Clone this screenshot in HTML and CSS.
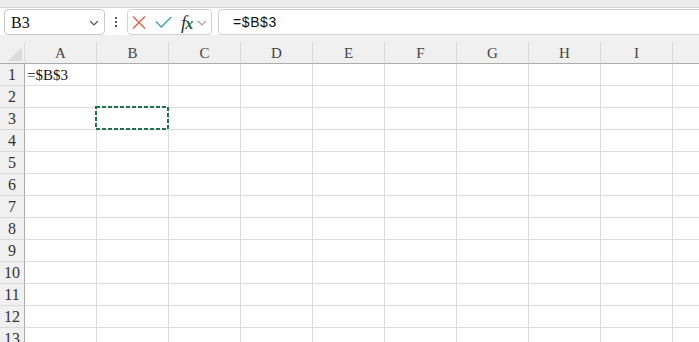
FILE: index.html
```html
<!DOCTYPE html>
<html>
<head>
<meta charset="utf-8">
<link rel="stylesheet" href="styles.css">
</head>
<body>
<div class="topstrip"></div>
<div class="fbar">
  <div class="namebox">
    <span class="nb-text">B3</span>
    <svg class="nb-chev" width="10" height="6" viewBox="0 0 10 6"><path d="M1 1 L5 5 L9 1" fill="none" stroke="#555" stroke-width="1.2"/></svg>
  </div>
  <div class="dots"><i></i><i></i><i></i></div>
  <div class="fxbox">
    <svg class="ic-x" width="14" height="13" viewBox="0 0 14 13"><path d="M1 0.5 L13 12.5 M13 0.5 L1 12.5" stroke="#e4674f" stroke-width="1.5" fill="none"/></svg>
    <svg class="ic-ok" width="17" height="12" viewBox="0 0 17 12"><path d="M0.8 5.5 L6.3 11 L16.3 1" stroke="#48a9a3" stroke-width="1.5" fill="none"/></svg>
    <span class="fx"><span class="fx-f">f</span><span class="fx-x">x</span></span>
    <svg class="fx-chev" width="10" height="6" viewBox="0 0 10 6"><path d="M1 1 L5 5 L9 1" fill="none" stroke="#a0a0a0" stroke-width="1.2"/></svg>
  </div>
  <div class="finput">=$B$3</div>
</div>
<div class="sheet">
  <div class="band"></div>
  <div class="grid">
    <div class="corner"><svg width="24" height="21" viewBox="0 0 24 21"><polygon points="22,5 22,19 8,19" fill="#dcdcdc"/></svg></div>
    <div class="ch">A</div><div class="ch">B</div><div class="ch">C</div><div class="ch">D</div><div class="ch">E</div><div class="ch">F</div><div class="ch">G</div><div class="ch">H</div><div class="ch">I</div><div class="ch"></div>

    <div class="rh">1</div><div class="c txt">=$B$3</div><div class="c"></div><div class="c"></div><div class="c"></div><div class="c"></div><div class="c"></div><div class="c"></div><div class="c"></div><div class="c"></div><div class="c"></div>
    <div class="rh">2</div><div class="c"></div><div class="c"></div><div class="c"></div><div class="c"></div><div class="c"></div><div class="c"></div><div class="c"></div><div class="c"></div><div class="c"></div><div class="c"></div>
    <div class="rh">3</div><div class="c"></div><div class="c"></div><div class="c"></div><div class="c"></div><div class="c"></div><div class="c"></div><div class="c"></div><div class="c"></div><div class="c"></div><div class="c"></div>
    <div class="rh">4</div><div class="c"></div><div class="c"></div><div class="c"></div><div class="c"></div><div class="c"></div><div class="c"></div><div class="c"></div><div class="c"></div><div class="c"></div><div class="c"></div>
    <div class="rh">5</div><div class="c"></div><div class="c"></div><div class="c"></div><div class="c"></div><div class="c"></div><div class="c"></div><div class="c"></div><div class="c"></div><div class="c"></div><div class="c"></div>
    <div class="rh">6</div><div class="c"></div><div class="c"></div><div class="c"></div><div class="c"></div><div class="c"></div><div class="c"></div><div class="c"></div><div class="c"></div><div class="c"></div><div class="c"></div>
    <div class="rh">7</div><div class="c"></div><div class="c"></div><div class="c"></div><div class="c"></div><div class="c"></div><div class="c"></div><div class="c"></div><div class="c"></div><div class="c"></div><div class="c"></div>
    <div class="rh">8</div><div class="c"></div><div class="c"></div><div class="c"></div><div class="c"></div><div class="c"></div><div class="c"></div><div class="c"></div><div class="c"></div><div class="c"></div><div class="c"></div>
    <div class="rh">9</div><div class="c"></div><div class="c"></div><div class="c"></div><div class="c"></div><div class="c"></div><div class="c"></div><div class="c"></div><div class="c"></div><div class="c"></div><div class="c"></div>
    <div class="rh">10</div><div class="c"></div><div class="c"></div><div class="c"></div><div class="c"></div><div class="c"></div><div class="c"></div><div class="c"></div><div class="c"></div><div class="c"></div><div class="c"></div>
    <div class="rh">11</div><div class="c"></div><div class="c"></div><div class="c"></div><div class="c"></div><div class="c"></div><div class="c"></div><div class="c"></div><div class="c"></div><div class="c"></div><div class="c"></div>
    <div class="rh">12</div><div class="c"></div><div class="c"></div><div class="c"></div><div class="c"></div><div class="c"></div><div class="c"></div><div class="c"></div><div class="c"></div><div class="c"></div><div class="c"></div>
    <div class="rh">13</div><div class="c"></div><div class="c"></div><div class="c"></div><div class="c"></div><div class="c"></div><div class="c"></div><div class="c"></div><div class="c"></div><div class="c"></div><div class="c"></div>
  </div>
  <svg class="marquee" width="74" height="24" viewBox="0 0 74 24"><rect x="1" y="1" width="72" height="22" fill="none" stroke="#21734a" stroke-width="2" stroke-dasharray="4 2"/></svg>
</div>
</body>
</html>
```

FILE: styles.css
```css
html, body {
  margin: 0;
  padding: 0;
  width: 699px;
  height: 342px;
  overflow: hidden;
  background: #ffffff;
}
.topstrip {
  height: 7px;
  background: #ebebeb;
  border-bottom: 1px solid #d6d6d6;
}
.fbar {
  display: flex;
  align-items: flex-start;
  padding: 1px 0 0 4px;
  height: 26px;
  background: #ffffff;
  overflow: hidden;
}
.namebox {
  box-sizing: border-box;
  width: 101px;
  height: 26px;
  border: 1px solid #cacaca;
  border-radius: 4px;
  display: flex;
  align-items: center;
  justify-content: space-between;
  padding: 0 5px 0 6px;
}
.nb-text {
  font-family: "Liberation Serif", serif;
  font-size: 16px;
  color: #111;
  margin-top: 1px;
}
.nb-chev { display: block; margin-top: 1px; }
.dots {
  width: 22px;
  height: 26px;
  display: flex;
  flex-direction: column;
  align-items: center;
  justify-content: center;
  gap: 2px;
}
.dots i {
  display: block;
  width: 2px;
  height: 2px;
  background: #555;
}
.fxbox {
  box-sizing: border-box;
  width: 85px;
  height: 26px;
  border: 1px solid #d2d2d2;
  border-radius: 4px;
  display: flex;
  align-items: center;
  padding-left: 4px;
}
.ic-x { display: block; margin-top: 1px; }
.ic-ok { display: block; margin-left: 9px; }
.fx {
  font-family: "Liberation Serif", serif;
  font-style: italic;
  font-size: 19px;
  margin-left: 9px;
  line-height: 1;
  letter-spacing: -1px;
}
.fx-f { color: #333; }
.fx-x { color: #1e5f48; font-weight: bold; font-size: 16px; }
.fx-chev { display: block; margin-left: 5px; margin-top: 2px; }
.finput {
  box-sizing: border-box;
  flex: 1;
  margin-left: 6px;
  height: 26px;
  border: 1px solid #d2d2d2;
  border-right: none;
  border-radius: 4px 0 0 4px;
  font-family: "Liberation Sans", sans-serif;
  font-size: 14px;
  letter-spacing: 0.6px;
  color: #111;
  padding-left: 14px;
  line-height: 24px;
}
.sheet {
  position: relative;
  width: 699px;
  overflow: hidden;
  background: #ffffff;
}
.band {
  height: 7px;
  background: #f0f0f0;
}
.grid {
  display: grid;
  grid-template-columns: 25px repeat(10, 72px);
  grid-auto-rows: 22px;
}
.corner {
  box-sizing: border-box;
  background: #f0f0f0;
  border-right: 1px solid #dcdcdc;
  border-bottom: 1px solid #ababab;
}
.corner svg { display: block; }
.ch {
  box-sizing: border-box;
  background: #f0f0f0;
  border-right: 1px solid #d8d8d8;
  border-bottom: 1px solid #ababab;
  font-family: "Liberation Serif", serif;
  font-size: 15px;
  color: #444;
  text-align: center;
  line-height: 22px;
}
.rh {
  box-sizing: border-box;
  background: #f0f0f0;
  border-right: 1px solid #ababab;
  border-bottom: 1px solid #dadada;
  font-family: "Liberation Serif", serif;
  font-size: 16px;
  color: #333;
  text-align: center;
  line-height: 22px;
}
.c {
  box-sizing: border-box;
  border-right: 1px solid #dcdcdc;
  border-bottom: 1px solid #dcdcdc;
}
.txt {
  font-family: "Liberation Serif", serif;
  font-size: 15px;
  color: #111;
  line-height: 22px;
  padding-left: 2px;
  white-space: nowrap;
}
.marquee {
  position: absolute;
  left: 95px;
  top: 71px;
  display: block;
}
```
